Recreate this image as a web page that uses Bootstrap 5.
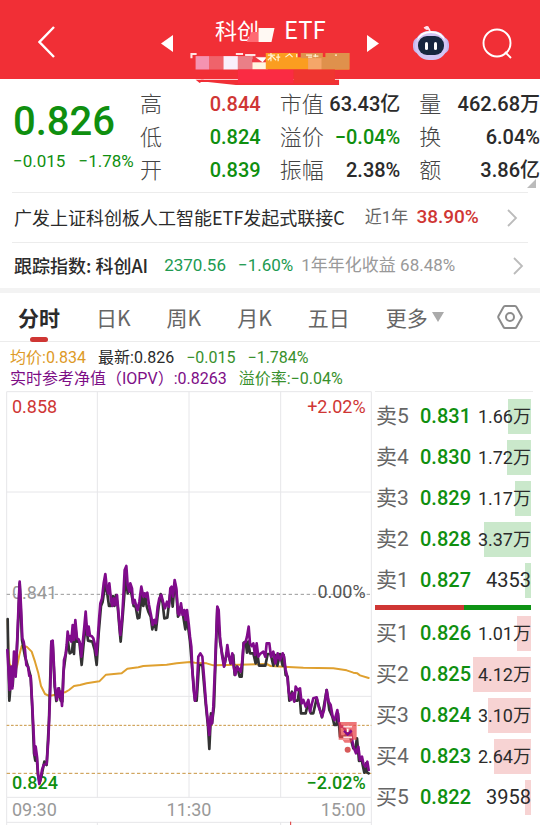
<!DOCTYPE html>
<html lang="zh-CN">
<head>
<meta charset="utf-8">
<meta name="viewport" content="width=device-width, initial-scale=1">
<title>科创 ETF</title>
<link rel="stylesheet" href="https://cdn.jsdelivr.net/npm/bootstrap@5.3.0/dist/css/bootstrap.min.css">
<style>
:root { --up: #cf3634; --down: #0f8f0f; --ink: #2b2b2b; --soft: #666; --pale: #999; --rule: #ececec; }
body { font-family: Roboto, "Noto Sans CJK SC", sans-serif; color: var(--ink); background: #fff; line-height: 1.2; overflow-x: hidden; }
.cjk { font-family: "Noto Sans CJK SC", sans-serif; }
svg { display: block; }
.topbar { background: #f12f36; height: 79px; color: #fff; padding: 6px 27px 0; }
.back { margin-left: 11px; }
.title-box { width: 150px; margin: 0 22px; }
.title-text { font-size: 22px; line-height: 30px; padding: 8px 0 0 20px; }
.title-text .latin { font-size: 24px; }
.title-text .gap-mark { width: 25px; overflow: visible; }
.tag-strip { margin: 9px 0 0 0; overflow: visible; }
.icon-btn { background: none; border: 0; padding: 0; color: inherit; }
.t-up { color: var(--up); } .t-down { color: var(--down); } .t-soft { color: var(--soft); } .t-pale { color: var(--pale); }
.t-index { color: #219a51; } .t-avg { color: #dd9a26; } .t-iopv { color: #7d0d86; } .t-chg { color: #38902c; }
.stats { padding: 9px 0 5px 13px; }
.price-col { width: 127px; }
.price-now { font-size: 40px; line-height: 50px; font-weight: 500; margin-top: 9px; }
.price-diff { font-size: 17px; line-height: 24px; gap: 13px; margin-top: 2px; white-space: nowrap; }
.stat-cols { gap: 19px; }
.stat-row { height: 33px; white-space: nowrap; }
.stat-row dt { font-size: 22px; font-weight: 300; color: #444; line-height: 33px; }
.stat-row dd { font-size: 20px; font-weight: 500; line-height: 33px; margin: 0; }
.corner { position: absolute; right: 4px; bottom: 4px; }
.line-row { margin: 0 12px; border-top: 1px solid var(--rule); color: var(--ink); text-decoration: none; white-space: nowrap; font-size: 18px; padding: 0 10px 0 2px; height: 50px; }
.line-row.second { height: 46px; padding-right: 4px; }
.lead-gap { margin-left: 20px; }
.step-gap { margin-left: 12px; }
.fs-17 { font-size: 17px; } .fs-19 { font-size: 19px; }
.band { height: 5px; background: #f3f3f3; }
.tabs { height: 49px; border-bottom: 1px solid var(--rule); padding: 0 17px 0 18px; }
.tabs .tab { font-size: 21px; color: var(--soft); line-height: 48px; height: 48px; position: relative; white-space: nowrap; }
.tabs .tab.on { color: var(--ink); font-weight: 700; }
.tabs .tab.on::after { content: ""; position: absolute; left: 12px; bottom: -1px; width: 18px; height: 5px; border-radius: 3px; background: var(--up); }
.tab-list { gap: 36px; }
.legend-block { font-size: 16px; line-height: 21px; padding: 5px 10px 2px; white-space: nowrap; }
.legend-line { gap: 12px; }
.trade { padding: 0 7px 0 6px; }
.chart { min-width: 0; }
.chart text { font-family: Roboto, sans-serif; font-size: 54px; }
.book { width: 158px; margin-left: 3px; border-top: 1px solid var(--rule); padding-top: 7px; }
.book table { width: 156px; border-collapse: separate; border-spacing: 0; }
.book td, .book th { padding: 0 0 6px; height: 41px; line-height: 35px; white-space: nowrap; }
.book th { font-size: 21px; font-weight: 400; color: var(--soft); width: 45px; padding-left: 1px; }
.book td.quote { font-size: 20px; font-weight: 500; color: var(--down); width: 50px; }
.vol { position: relative; height: 35px; font-size: 18px; text-align: right; }
.vol.whole { font-size: 20px; }
.vol i { position: absolute; right: 0; top: 0; height: 35px; background: #cae8cb; }
.bids .vol i { background: #f7d3d3; }
.vol span { position: relative; }
.ratio { height: 5px; width: 156px; margin: 1px 0 6px; background: #0e9314; }
.ratio div { height: 5px; background: var(--up); }
</style>
</head>
<body>
<header class="topbar d-flex align-items-start">
  <div class="flex-fill w-25 d-flex">
    <button class="icon-btn back mt-3" aria-label="返回"><svg width="18" height="40" viewBox="0 0 18 40" fill="none" stroke="#fff" stroke-width="2.4"><path d="M16 5 1.500 20 16 35"/></svg></button>
  </div>
  <button class="icon-btn mt-4" aria-label="上一只"><svg width="12" height="28" viewBox="0 0 12 28"><path d="M12 5v17L0 13.500z" fill="#fff"/></svg></button>
  <div class="title-box">
    <h1 class="title-text cjk d-flex m-0 fw-normal"><span>科创</span>
      <svg class="gap-mark" height="30" viewBox="0 0 24 30"><path d="M-13 28L-8 18H-1V28z" fill="#ff6a72"/><path d="M-1 14H15L12 28H-1z" fill="#fff9f3"/></svg><span class="latin">ETF</span></h1>
    <svg class="tag-strip" width="156" height="32" viewBox="0 0 150 31">
      <path d="M-5 0H1V2H-3V5H-5zM39 0h7v2h-7zM48 1h10v5h-5V3h-5z" fill="#ffe3e3"/>
      <path d="M0 3h13v13H0z" fill="#f593b1"/><path d="M13 3h14v13H13z" fill="#ef636b"/><path d="M27 3h14v13H27z" fill="#f9effc"/><path d="M41 3h14v13H41z" fill="#ea7f87"/>
      <path d="M55 3h13v6H55z" fill="#ee3a44"/><path d="M58 4h11l-4 5z" fill="#fff"/><path d="M55 9h15v7H55z" fill="#fff7e1"/>
      <path d="M68 0h31v4h3V0h21v4h3V0h23v16H68z" fill="#fb9d20"/><path d="M102 0h21v4h3V0h23v16h-40V5h-7z" fill="#df914c"/><path d="M109 5h13v11h-13z" fill="#f5a669"/>
      <path d="M70 2h7M73 0v8M70 7l4-4 4 4M80 1v7M78 4h4M87 4l4-3 3 3M98 1v3M107 2h6M109 4h4M116 1v3M114 3h5M135 2h2" stroke="#fff0ce" stroke-width="1.200" fill="none"/>
      <path d="M5 26h134v5H39L12 28H5z" fill="#f12f36"/><path d="M0 26h8l-4 3z" fill="#f12f36"/>
      <path d="M41 16h54v13H41z" fill="#fa2b43"/><path d="M95 16h40v13H95z" fill="#ef3530"/>
    </svg>
  </div>
  <button class="icon-btn mt-4" aria-label="下一只"><svg width="12" height="28" viewBox="0 0 12 28"><path d="M0 5v17l12-8.500z" fill="#fff"/></svg></button>
  <div class="flex-fill w-25 d-flex justify-content-end gap-4 pt-3">
    <button class="icon-btn me-2" aria-label="智能助手"><svg width="36" height="38" viewBox="0 0 36 38">
      <path d="M11 5q5-2 6 4" fill="none" stroke="#ffe1ea" stroke-width="1.800"/><circle cx="14" cy="5" r="2" fill="#ffe7ef"/>
      <rect x="0" y="14" width="36" height="17" rx="7" fill="#c5b5ee"/><rect x="2" y="8" width="32" height="29" rx="14" fill="#d3c5f4"/><path d="M4 18Q6 8 18 8t14 10q-5-8-14-8T4 18" fill="#fff"/>
      <rect x="5" y="13" width="26" height="19" rx="9" fill="#17263f"/><rect x="12" y="19" width="3" height="8" rx="1.500" fill="#fff"/><rect x="21" y="19" width="3" height="8" rx="1.500" fill="#fff"/></svg></button>
    <button class="icon-btn" aria-label="搜索"><svg width="32" height="40" viewBox="0 0 32 40" fill="none" stroke="#fff" stroke-width="1.900"><circle cx="16" cy="21" r="13.500"/><path d="m24 30 6 6"/></svg></button>
  </div>
</header>

<main>
<section class="stats d-flex position-relative">
  <div class="price-col t-down">
    <div class="price-now">0.826</div>
    <div class="price-diff d-flex"><span>−0.015</span><span>−1.78%</span></div>
  </div>
  <div class="stat-cols d-flex flex-fill">
    <dl class="flex-fill w-25 m-0">
      <div class="stat-row d-flex justify-content-between"><dt>高</dt><dd class="t-up">0.844</dd></div>
      <div class="stat-row d-flex justify-content-between"><dt>低</dt><dd class="t-down">0.824</dd></div>
      <div class="stat-row d-flex justify-content-between"><dt>开</dt><dd class="t-down">0.839</dd></div>
    </dl>
    <dl class="flex-fill w-25 m-0">
      <div class="stat-row d-flex justify-content-between"><dt>市值</dt><dd>63.43亿</dd></div>
      <div class="stat-row d-flex justify-content-between"><dt>溢价</dt><dd class="t-down">−0.04%</dd></div>
      <div class="stat-row d-flex justify-content-between"><dt>振幅</dt><dd>2.38%</dd></div>
    </dl>
    <dl class="flex-fill w-25 m-0">
      <div class="stat-row d-flex justify-content-between"><dt>量</dt><dd>462.68万</dd></div>
      <div class="stat-row d-flex justify-content-between"><dt>换</dt><dd>6.04%</dd></div>
      <div class="stat-row d-flex justify-content-between"><dt>额</dt><dd>3.86亿</dd></div>
    </dl>
  </div>
  <svg class="corner" width="9" height="9" viewBox="0 0 9 9"><path d="M9 0v9H0z" fill="#bbb"/></svg>
</section>

<a href="#fund" class="line-row d-flex align-items-center">
  <span class="cjk">广发上证科创板人工智能ETF发起式联接C</span>
  <span class="fs-17 t-soft lead-gap me-2">近1年</span><span class="fs-19 fw-medium t-up">38.90%</span>
  <svg class="ms-auto" width="11" height="20" viewBox="0 0 11 20" fill="none" stroke="#bbb" stroke-width="1.800"><path d="m1 2 8 8-8 8"/></svg>
</a>
<a href="#index" class="line-row second d-flex align-items-center">
  <span class="cjk fw-medium">跟踪指数: 科创AI</span>
  <span class="fs-17 t-index ms-3">2370.56</span><span class="fs-17 t-index step-gap me-2">−1.60%</span><span class="fs-17 t-pale">1年年化收益 68.48%</span>
  <svg class="ms-auto" width="11" height="20" viewBox="0 0 11 20" fill="none" stroke="#bbb" stroke-width="1.800"><path d="m1 2 8 8-8 8"/></svg>
</a>
<div class="band"></div>

<nav class="tabs cjk d-flex justify-content-between align-items-center">
  <div class="tab-list d-flex">
    <button class="icon-btn tab on">分时</button>
    <button class="icon-btn tab">日K</button>
    <button class="icon-btn tab">周K</button>
    <button class="icon-btn tab">月K</button>
    <button class="icon-btn tab">五日</button>
    <button class="icon-btn tab d-flex align-items-center gap-1">更多<svg width="12" height="10" viewBox="0 0 12 10"><path d="M0 0h12L6 10z" fill="#aaa"/></svg></button>
  </div>
  <button class="icon-btn" aria-label="设置"><svg width="26" height="26" viewBox="0 0 26 26" fill="none" stroke="#8c8c8c" stroke-width="2" stroke-linejoin="round"><path d="M8 2h10q1 0 1.500 1L24.500 12q.5 1 0 2l-5 9q-.5 1-1.500 1H8q-1 0-1.500-1l-5-9q-.5-1 0-2l5-9Q7 2 8 2z"/><circle cx="13" cy="13" r="4"/></svg></button>
</nav>

<section class="legend-block">
  <div class="legend-line d-flex"><span class="t-avg">均价:0.834</span><span>最新:0.826</span><span class="t-chg">−0.015</span><span class="t-chg">−1.784%</span></div>
  <div class="legend-line d-flex"><span class="t-iopv">实时参考净值（IOPV）:0.8263</span><span class="t-chg">溢价率:−0.04%</span></div>
</section>

<section class="trade d-flex">
  <div class="chart flex-fill">
    <svg class="w-100" viewBox="18 -507 1098 1302" role="img" aria-label="分时走势">
      <g fill="none" stroke="#e6e6e9" stroke-width="3">
        <path d="M20-505H1114V712H20zM292-505V712M567-505V712M842-505V712M20-204H1114M20 409H1114M20 712V801M1114 712V801M20 787H1114M292 787V801M842 787V801"/>
      </g>
      <path d="M20 103H1114" stroke="#999" stroke-width="3" stroke-dasharray="10 8"/>
      <g stroke="#c89540" stroke-width="3"><path d="M20 496H1114" stroke-dasharray="8 5"/><path d="M20 640H1114" stroke-dasharray="10 7"/></g>
      <path d="M872 785V801" stroke="#d33" stroke-width="3"/>
      <g fill="#999"><text x="36" y="117">0.841</text><text x="36" y="769">09:30</text><text x="567" y="769" text-anchor="middle">11:30</text><text x="1097" y="769" text-anchor="end">15:00</text></g>
      <g fill="#cf3634"><text x="36" y="-441">0.858</text><text x="1097" y="-441" text-anchor="end">+2.02%</text></g>
      <text x="1097" y="115" text-anchor="end" fill="#555">0.00%</text>
      <g fill="#0f8f0f" font-weight="500"><text x="36" y="687">0.824</text><text x="1097" y="687" text-anchor="end">−2.02%</text></g>
      <g fill="none" stroke-linejoin="round" stroke-linecap="round">
        <path stroke="#dfa02f" stroke-width="6" d="M23 180 25 270 29 312 45 335 52 315 58 285 65 258 80 260 95 275 105 305 115 340 123 378 135 402 148 408 165 404 180 400 195 397 207 390 222 378 240 375 260 370 298 364 318 344 365 340 382 326 415 322 430 318 500 314 530 310 570 306 585 308 620 310 640 316 720 314 800 312 812 318 850 320 910 323 1000 325 1040 331 1060 338 1072 340 1080 346 1106 354"/>
        <path stroke="#333" stroke-width="8" d="M23 177 25 300 28 422 34 350 38 378 43 300 47 345 54 200 59 70 66 240 75 290 84 320 92 350 97 450 102 580 106 602 110 590 114 645 119 668 124 650 133 605 140 615 147 480 154 245 158 250 164 380 169 423 173 400 177 385 182 422 187 425 190 340 197 285 204 245 209 280 216 275 219 245 222 282 226 200 231 245 238 245 245 315 251 250 258 190 264 242 277 245 284 270 290 315 296 220 303 138 308 125 316 70 321 95 327 138 333 138 339 108 343 138 348 105 353 138 358 200 362 245 368 170 378 40 383 100 389 75 395 105 401 138 407 140 413 175 418 173 425 105 430 138 436 110 440 138 445 155 452 170 457 208 463 180 468 210 476 140 482 102 488 130 493 175 502 173 510 105 514 100 518 140 524 70 529 95 534 170 542 140 549 165 556 208 561 175 570 245 577 330 585 422 590 422 597 315 607 315 617 430 624 500 628 567 633 460 636 490 642 440 652 142 660 245 668 290 673 317 680 280 687 288 692 310 700 285 704 345 711 320 719 350 725 350 731 248 737 245 741 278 745 245 750 280 760 280 767 310 772 280 777 317 796 317 803 282 812 282 820 317 826 285 832 317 840 282 848 317 851 285 857 345 863 350 868 422 876 395 882 422 893 422 898 390 903 460 917 460 925 425 932 460 940 460 950 415 960 450 966 472 980 390 988 450 997 470 1003 495 1009 495 1014 460 1020 530 1035 530 1043 515 1051 532 1060 565 1066 565 1071 535 1077 603 1085 600 1093 638 1098 610 1101 637 1106 640"/>
        <path stroke="#800b8b" stroke-width="8" d="M22 270 29 390 33 320 37 385 42 275 47 350 52 230 56 130 59 65 63 140 67 235 71 245 75 270 79 315 84 320 88 348 92 348 96 420 100 500 104 585 107 560 111 590 114 640 118 672 122 655 126 630 131 615 140 612 145 540 149 440 152 350 154 245 158 242 161 300 165 380 168 400 171 420 175 385 179 410 182 395 186 438 189 380 192 300 197 282 200 255 203 215 207 240 211 228 214 245 218 195 222 240 226 180 231 235 236 238 240 250 244 290 248 250 253 200 257 155 262 225 266 200 270 228 275 228 280 235 285 255 289 285 293 240 297 180 301 130 306 115 311 70 316 42 320 80 325 100 328 70 333 120 337 138 341 115 346 135 351 105 356 165 361 225 366 180 370 110 374 30 379 18 383 75 388 95 391 70 396 85 399 130 404 120 408 135 413 150 418 125 424 80 430 110 434 100 438 110 442 98 447 135 453 165 458 195 463 180 468 190 473 140 478 115 484 105 489 125 495 145 501 125 507 140 511 85 515 80 519 110 524 60 529 85 534 160 538 165 543 130 548 165 553 150 557 180 561 150 566 190 570 230 574 260 577 330 581 390 585 422 590 395 595 290 601 280 607 290 612 350 618 430 623 480 628 525 632 470 636 490 640 440 645 320 652 140 656 150 660 230 666 285 672 320 678 290 682 255 687 290 692 310 697 280 701 320 706 345 712 320 722 335 726 310 731 250 737 245 741 230 746 200 750 250 755 258 760 250 765 285 770 250 775 290 780 282 790 275 796 290 800 250 808 250 813 290 820 275 826 310 833 280 840 300 848 280 852 290 857 330 862 350 866 395 872 420 878 400 883 425 887 380 893 390 900 385 905 430 910 420 917 440 925 420 930 455 936 430 940 415 950 412 956 440 966 470 972 450 980 390 986 425 992 435 998 470 1004 480 1012 450 1016 485 1022 500 1030 500 1038 515 1045 525 1052 512 1060 560 1068 580 1075 560 1080 600 1086 590 1090 610 1096 620 1102 605 1106 630"/>
      </g>
      <path d="M1016 486h54v53h-54zM1028 540h30l-6 8h-18z" fill="#e8484c" opacity=".75"/>
      <circle cx="1043" cy="569" r="9" fill="#d75a5a"/>
      <path d="M1030 500h26M1030 532h26" stroke="#fbe3e5" stroke-width="5"/><path d="M1032 512l11 12 12-12" fill="none" stroke="#800b8b" stroke-width="7"/><path d="M1043 506v10" stroke="#fff" stroke-width="5"/>
    </svg>
  </div>
  <div class="book flex-shrink-0">
    <table class="asks"><tbody>
      <tr><th scope="row">卖5</th><td class="quote">0.831</td><td><div class="vol"><i></i><span>1.66万</span></div></td></tr>
      <tr><th scope="row">卖4</th><td class="quote">0.830</td><td><div class="vol"><i></i><span>1.72万</span></div></td></tr>
      <tr><th scope="row">卖3</th><td class="quote">0.829</td><td><div class="vol"><i></i><span>1.17万</span></div></td></tr>
      <tr><th scope="row">卖2</th><td class="quote">0.828</td><td><div class="vol"><i></i><span>3.37万</span></div></td></tr>
      <tr><th scope="row">卖1</th><td class="quote">0.827</td><td><div class="vol whole"><i></i><span>4353</span></div></td></tr>
    </tbody></table>
    <div class="ratio"><div style="width:57%"></div></div>
    <table class="bids"><tbody>
      <tr><th scope="row">买1</th><td class="quote">0.826</td><td><div class="vol"><i></i><span>1.01万</span></div></td></tr>
      <tr><th scope="row">买2</th><td class="quote">0.825</td><td><div class="vol"><i></i><span>4.12万</span></div></td></tr>
      <tr><th scope="row">买3</th><td class="quote">0.824</td><td><div class="vol"><i></i><span>3.10万</span></div></td></tr>
      <tr><th scope="row">买4</th><td class="quote">0.823</td><td><div class="vol"><i></i><span>2.64万</span></div></td></tr>
      <tr><th scope="row">买5</th><td class="quote">0.822</td><td><div class="vol whole"><i></i><span>3958</span></div></td></tr>
    </tbody></table>
  </div>
</section>
</main>
<script src="https://cdn.jsdelivr.net/npm/bootstrap@5.3.0/dist/js/bootstrap.bundle.min.js"></script>
<script>
// Depth bars: 14px per ten thousand lots, as wide as the quoted volume.
document.querySelectorAll('.vol').forEach(function (cell) {
  var text = cell.querySelector('span').textContent;
  var lots = parseFloat(text) / (text.endsWith('万') ? 1 : 10000);
  cell.querySelector('i').style.width = Math.round(lots * 14) + 'px';
});
</script>
</body>
</html>
